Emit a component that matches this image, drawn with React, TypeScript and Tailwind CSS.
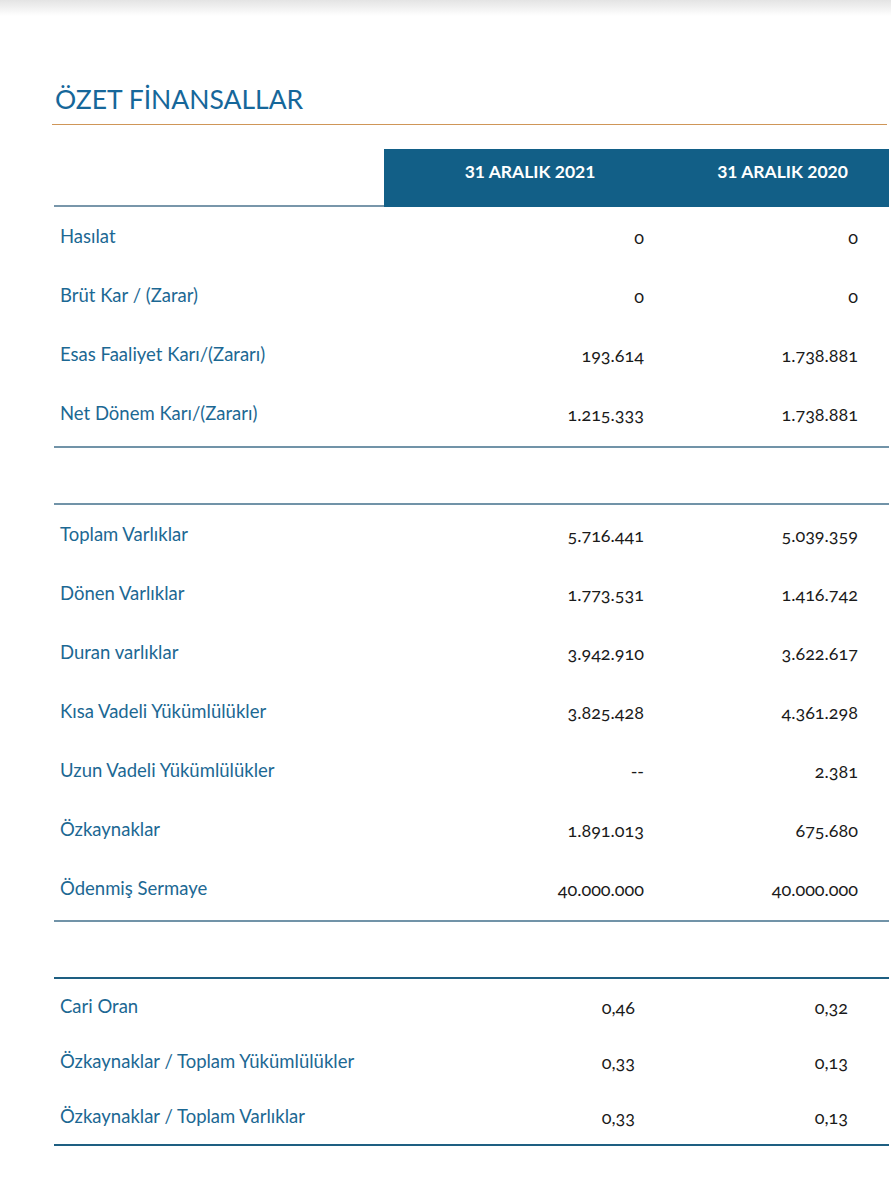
const incomeRows = [
  { label: "Hasılat", y2021: "0", y2020: "0" },
  { label: "Brüt Kar / (Zarar)", y2021: "0", y2020: "0" },
  { label: "Esas Faaliyet Karı/(Zararı)", y2021: "193.614", y2020: "1.738.881" },
  { label: "Net Dönem Karı/(Zararı)", y2021: "1.215.333", y2020: "1.738.881" },
];

const balanceRows = [
  { label: "Toplam Varlıklar", y2021: "5.716.441", y2020: "5.039.359" },
  { label: "Dönen Varlıklar", y2021: "1.773.531", y2020: "1.416.742" },
  { label: "Duran varlıklar", y2021: "3.942.910", y2020: "3.622.617" },
  { label: "Kısa Vadeli Yükümlülükler", y2021: "3.825.428", y2020: "4.361.298" },
  { label: "Uzun Vadeli Yükümlülükler", y2021: "--", y2020: "2.381" },
  { label: "Özkaynaklar", y2021: "1.891.013", y2020: "675.680" },
  { label: "Ödenmiş Sermaye", y2021: "40.000.000", y2020: "40.000.000" },
];

const ratioRows = [
  { label: "Cari Oran", y2021: "0,46", y2020: "0,32" },
  { label: "Özkaynaklar / Toplam Yükümlülükler", y2021: "0,33", y2020: "0,13" },
  { label: "Özkaynaklar / Toplam Varlıklar", y2021: "0,33", y2020: "0,13" },
];

type Row = { label: string; y2021: string; y2020: string };

const grid = "grid grid-cols-[330px_292px_213px]";

const DataRow = ({ row, ratio }: { row: Row; ratio?: boolean }) => (
  <div className={`${grid} items-center ${ratio ? "h-[55px]" : "h-[59px]"}`}>
    <div className="pl-[6px] text-[18.5px] text-[#1c6893]">{row.label}</div>
    <div
      className={`pt-[2px] text-right text-[18px] text-[#1a1a1a] [font-feature-settings:'onum'] ${
        ratio ? "pr-[41px]" : "pr-[32px]"
      }`}
    >
      {row.y2021}
    </div>
    <div
      className={`pt-[2px] text-right text-[18px] text-[#1a1a1a] [font-feature-settings:'onum'] ${
        ratio ? "pr-[41px]" : "pr-[31px]"
      }`}
    >
      {row.y2020}
    </div>
  </div>
);

const App = () => {
  return (
    <div className="relative min-h-[1200px] w-[891px] bg-white font-['Lato',sans-serif]">
      <div className="h-[16px] bg-gradient-to-b from-[#e4e4e4] to-white" />
      <div className="pl-[52px] pr-[2px]">
        <h1 className="pl-[3px] pt-[68px] text-[26.5px] leading-[30px] text-[#16679a]">
          ÖZET FİNANSALLAR
        </h1>
        <div className="mt-[10px] w-[835px] h-[1px] bg-[#cf9658]" />

        <div className="ml-[2px] mt-[24px]">
          <div className={`${grid} h-[58px]`}>
            <div className="border-b-2 border-[#7896aa]" />
            <div className="flex items-center justify-center bg-[#125f87] pb-[12px] text-[17.5px] font-bold text-white">
              31 ARALIK 2021
            </div>
            <div className="flex items-center justify-center bg-[#125f87] pb-[12px] text-[17.5px] font-bold text-white">
              31 ARALIK 2020
            </div>
          </div>

          <div className="pb-[3px]">
            {incomeRows.map((r) => (
              <DataRow key={r.label} row={r} />
            ))}
          </div>
          <div className="h-[2px] bg-[#7193a8]" />
          <div className="h-[55px]" />
          <div className="h-[2px] bg-[#7193a8]" />

          <div className="pb-[2px]">
            {balanceRows.map((r) => (
              <DataRow key={r.label} row={r} />
            ))}
          </div>
          <div className="h-[2px] bg-[#7193a8]" />
          <div className="h-[55px]" />
          <div className="h-[2px] bg-[#1e5f82]" />

          {ratioRows.map((r) => (
            <DataRow key={r.label} row={r} ratio />
          ))}
          <div className="h-[2px] bg-[#1e5f82]" />
        </div>
      </div>
    </div>
  );
};

export default App;
